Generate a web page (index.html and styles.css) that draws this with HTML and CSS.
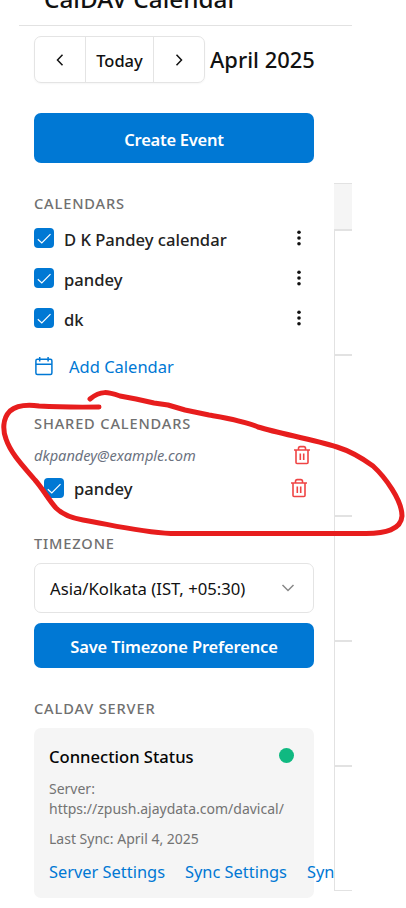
FILE: index.html
```html
<!DOCTYPE html>
<html lang="en">
<head>
<meta charset="utf-8">
<title>CalDAV Calendar</title>
<link rel="stylesheet" href="styles.css">
</head>
<body>
<svg class="defs" width="0" height="0">
  <symbol id="check" viewBox="0 0 20 20"><rect width="20" height="20" rx="4" fill="#0078d4"/><path d="M3.8 11.2 7.8 15 16.5 6.2" fill="none" stroke="#fff" stroke-width="1.2"/></symbol>
  <symbol id="dots" viewBox="0 0 6 18"><circle cx="3" cy="3.2" r="1.8"/><circle cx="3" cy="9" r="1.8"/><circle cx="3" cy="14.8" r="1.8"/></symbol>
  <symbol id="trash" viewBox="0 0 18 20"><path d="M1 5h16M3 5v12.500q0 1 1 1h10q1 0 1-1V5M5.500 5V3.300q0-1.700 1.700-1.700h3.600q1.700 0 1.700 1.700V5M7.300 8.500v6.500M10.700 8.500v6.500" fill="none" stroke="#ef4444" stroke-width="1.600"/></symbol>
</svg>
<div class="app">
  <header class="header"><h1 class="title">CalDAV Calendar</h1></header>
  <div class="nav">
    <div class="nav-group">
      <button class="nav-btn"><svg width="8" height="12" viewBox="0 0 8 12"><path d="M6.500.800 1.500 6l5 5.200"/></svg></button>
      <button class="nav-btn today">Today</button>
      <button class="nav-btn"><svg width="8" height="12" viewBox="0 0 8 12"><path d="M1.500.800 6.500 6l-5 5.200"/></svg></button>
    </div>
    <h2 class="month">April 2025</h2>
  </div>
  <div class="main">
    <aside class="sidebar">
      <button class="primary create">Create Event</button>
      <h3 class="heading">CALENDARS</h3>
      <ul class="list">
        <li class="row"><svg class="check"><use href="#check"/></svg><span class="name">D K Pandey calendar</span><svg class="dots"><use href="#dots"/></svg></li>
        <li class="row"><svg class="check"><use href="#check"/></svg><span class="name">pandey</span><svg class="dots"><use href="#dots"/></svg></li>
        <li class="row"><svg class="check"><use href="#check"/></svg><span class="name">dk</span><svg class="dots"><use href="#dots"/></svg></li>
      </ul>
      <a class="add"><svg width="20" height="20" viewBox="0 0 20 20"><rect x="1.900" y="3.200" width="16" height="15.300" rx="1.500"/><path d="M1.900 8.200h16M5.700 1v4.500M14.100 1v4.500"/></svg><span>Add Calendar</span></a>
      <h3 class="heading">SHARED CALENDARS</h3>
      <div class="owner"><span>dkpandey@example.com</span><svg class="trash"><use href="#trash"/></svg></div>
      <div class="row shared"><svg class="check"><use href="#check"/></svg><span class="name">pandey</span><svg class="trash"><use href="#trash"/></svg></div>
      <h3 class="heading">TIMEZONE</h3>
      <div class="select"><span>Asia/Kolkata (IST, +05:30)</span><svg width="14" height="8" viewBox="0 0 14 8"><path d="M1.500 1 7 6.500 12.500 1"/></svg></div>
      <button class="primary save">Save Timezone Preference</button>
      <h3 class="heading">CALDAV SERVER</h3>
      <section class="card">
        <div class="card-head"><span>Connection Status</span><i class="status"></i></div>
        <p class="meta">Server:<br>https://zpush.ajaydata.com/davical/</p>
        <p class="meta">Last Sync: April 4, 2025</p>
        <div class="links"><a>Server Settings</a><a>Sync Settings</a><a>Syn</a></div>
      </section>
    </aside>
    <div class="grid"><div class="grid-head"></div><div class="cell"></div><div class="cell tall"></div><div class="cell"></div><div class="cell"></div><div class="cell last"></div></div>
  </div>
</div>
<svg class="markup" width="406" height="160" viewBox="0 385 406 160"><path d="M99 407 Q65 407.500 39 406 C28 404.500 17 405 10 411 C2 419 3 431 6 439 C11 454 24 467 35 480 C43 489 48 499 56 508 C62 514 71 518 83 520 C108 524 138 532 171 533.500 H366 C385 533 401 530 402 516 C402 500 385 477 373 466 C362 458 350 451 337 447 C312 439 281 434 258 427 C245 421 226 418 209 415 L185 410 L168 405 L154 403 L136 399 L120 396 C108 392 101 390 90 399"/></svg>
</body>
</html>
```

FILE: styles.css
```css
* { box-sizing: border-box; }
body { margin: 0; height: 908px; overflow: hidden; background: #fff; color: #111; font: 16.5px "Noto Sans", "Open Sans", sans-serif; position: relative; }
h1, h2, h3, p, ul { margin: 0; padding: 0; }
button { font: inherit; border: 0; padding: 0; background: none; }
svg { display: block; flex: none; }
span, a { white-space: nowrap; }
.defs { position: absolute; }
.app { margin-left: 19px; width: 333px; }
.header { height: 26px; border-bottom: 1px solid #e2e2e2; overflow: hidden; padding-left: 25px; }
.title { font-size: 24.3px; font-weight: 500; line-height: 34px; margin-top: -18px; white-space: nowrap; }
.nav { display: flex; align-items: center; height: 47px; margin: 10px 0 0 15px; }
.nav-group { display: flex; width: 171px; height: 47px; border: 1px solid #e4e4e4; border-radius: 7px; box-shadow: 0 1px 2px #0000000a; }
.nav-btn { width: 51px; display: flex; align-items: center; justify-content: center; color: #111; font-weight: 500; }
.nav-btn svg { fill: none; stroke: #111; stroke-width: 1.5; }
.today { width: 69px; border: solid #e4e4e4; border-width: 0 1px; padding-top: 1px; }
.month { margin-left: 5px; font-size: 21.9px; font-weight: 500; line-height: 30px; white-space: nowrap; }
.main { display: flex; }
.sidebar { width: 315px; height: 825px; padding: 30px 20px 0 15px; overflow: hidden; }
.primary { display: flex; align-items: center; justify-content: center; width: 280px; background: #0078d4; color: #fff; border-radius: 7px; font-weight: 600; letter-spacing: -.15px; }
.create { height: 50px; padding-top: 3px; letter-spacing: -.25px; }
.save { height: 45px; margin-top: 10px; padding-top: 2px; }
.heading { color: #707070; font-size: 14.6px; font-weight: 500; line-height: 20px; white-space: nowrap; letter-spacing: .85px; height: 20px; }
.create + .heading { margin-top: 30px; }
.list { list-style: none; margin-top: 5px; }
.row { display: flex; align-items: center; height: 40px; }
.check { width: 20px; height: 20px; }
.name { flex: 1; margin-left: 10px; padding-top: 3px; font-size: 16.6px; font-weight: 500; color: #222; }
.dots { width: 6px; height: 18px; margin-right: 12px; fill: #111; }
.add { display: flex; align-items: center; height: 30px; margin: 13px 0 32px; color: #0078d4; }
.add svg { margin-right: 15px; fill: none; stroke: #0078d4; stroke-width: 1.5; }
.owner { display: flex; align-items: center; justify-content: space-between; height: 30px; margin-top: 7px; padding-right: 3px; color: #6b7280; font-size: 14.6px; font-style: italic; }
.trash { width: 18px; height: 20px; }
.shared { height: 36px; padding: 0 6px 0 10px; }
.shared .name { padding-top: 1px; }
.shared + .heading { margin-top: 27px; }
.select { display: flex; align-items: center; justify-content: space-between; height: 50px; margin-top: 10px; padding: 0 18px 0 15px; border: 1px solid #e4e4e4; border-radius: 7px; font-size: 16.7px; }
.select svg { fill: none; stroke: #888; stroke-width: 1.5; }
.save + .heading { margin-top: 30px; }
.card { height: 170px; margin-top: 10px; padding: 15px; background: #f5f5f5; border-radius: 7px; }
.card-head { display: flex; align-items: center; justify-content: space-between; height: 26px; padding-right: 5px; font-weight: 500; font-size: 16.6px; color: #050505; }
.status { width: 15px; height: 15px; border-radius: 50%; background: #10b981; margin-bottom: 2px; }
.meta { margin-top: 10px; color: #737373; font-size: 14px; line-height: 20px; white-space: nowrap; }
.links { display: flex; gap: 20px; margin-top: 11px; line-height: 24px; font-size: 16.4px; color: #0078d4; }
.grid { width: 18px; height: 708px; margin-top: 100px; border: solid #e2e2e2; border-width: 1px 0 1px 1px; }
.grid-head { height: 47px; background: #f5f5f5; border-bottom: 2px solid #e2e2e2; margin-left: -1px; }
.cell { height: 125px; border-bottom: 2px solid #e2e2e2; }
.tall { height: 161px; }
.last { border: 0; height: 120px; }
.markup { position: absolute; left: 0; top: 385px; fill: none; stroke: #e71d1d; stroke-width: 5; stroke-linecap: round; stroke-linejoin: round; }
```
